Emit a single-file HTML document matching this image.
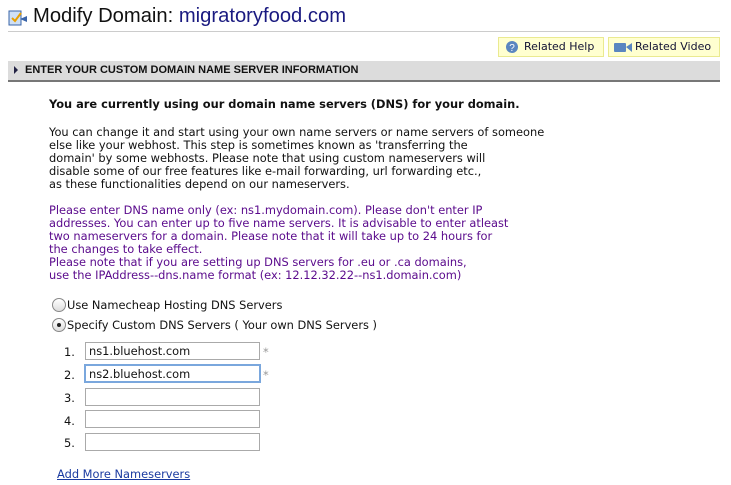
<!DOCTYPE html>
<html><head><style>
body{margin:0;background:#fff;width:731px;height:485px;overflow:hidden;position:relative;font-family:"DejaVu Sans",Verdana,sans-serif;font-size:11.4px;color:#111}
.a{position:absolute;white-space:nowrap}
.title{left:33px;top:5px;font-family:"Liberation Sans",Arial,sans-serif;font-size:20.2px;color:#111}
.title span{color:#1a1a80}
.hr{left:8px;top:31px;width:712px;height:1px;background:#ccc}
.btn{top:37px;height:18px;background:#ffffd0;border:1px solid #eaea90;font-size:11px;line-height:18px;color:#113}
.bar{left:8px;top:61px;width:712px;height:19px;background:#dcdcdc;border-bottom:2px solid #777}
.bar b{position:absolute;left:17px;top:3px;font-family:"Liberation Sans",Arial,sans-serif;font-size:11px;color:#111}
.p{left:49px;line-height:13px}
.pur{color:#5a0a8c}
.rad{width:12px;height:12px;border:1px solid #888;border-radius:50%;background:linear-gradient(#fff,#ddd)}
.in{left:85px;width:170px;height:16px;border:1px solid #aaa;font-size:11.4px;line-height:16px;padding-left:3px}
.n{left:64px}
.st{left:263px;color:#999}
</style></head><body>
<svg class="a" style="left:8px;top:9px" width="20" height="18" viewBox="0 0 20 18"><rect x="1" y="2" width="12" height="14" fill="#cfe0f5" stroke="#3a64a8"/><path d="M4 9l3 3 6-8" stroke="#e8a000" stroke-width="2" fill="none"/><path d="M12 10l7-3v6z" fill="#3a64a8"/></svg>
<div class="a title">Modify Domain: <span>migratoryfood.com</span></div>
<div class="a hr"></div>
<div class="a btn" style="left:498px;width:104px"><svg style="position:absolute;left:6px;top:2px" width="14" height="14"><circle cx="7" cy="7" r="6" fill="#5a86c0"/><text x="7" y="11" font-size="10" fill="#fff" text-anchor="middle" font-family="Liberation Sans">?</text></svg><span style="position:absolute;left:25px">Related Help</span></div>
<div class="a btn" style="left:608px;width:110px"><svg style="position:absolute;left:5px;top:4px" width="18" height="11"><rect x="0" y="1" width="12" height="9" rx="1" fill="#5a86c0"/><path d="M12 5l6-4v9z" fill="#5a86c0"/></svg><span style="position:absolute;left:26px">Related Video</span></div>
<div class="a bar"><span style="position:absolute;left:6px;top:5px;width:0;height:0;border-left:4px solid #224;border-top:4px solid transparent;border-bottom:4px solid transparent"></span><b>ENTER YOUR CUSTOM DOMAIN NAME SERVER INFORMATION</b></div>
<div class="a p" style="top:98px;font-weight:bold">You are currently using our domain name servers (DNS) for your domain.</div>
<div class="a p" style="top:126px">You can change it and start using your own name servers or name servers of someone<br>else like your webhost. This step is sometimes known as 'transferring the<br>domain' by some webhosts. Please note that using custom nameservers will<br>disable some of our free features like e-mail forwarding, url forwarding etc.,<br>as these functionalities depend on our nameservers.</div>
<div class="a p pur" style="top:204px">Please enter DNS name only (ex: ns1.mydomain.com). Please don't enter IP<br>addresses. You can enter up to five name servers. It is advisable to enter atleast<br>two nameservers for a domain. Please note that it will take up to 24 hours for<br>the changes to take effect.<br>Please note that if you are setting up DNS servers for .eu or .ca domains,<br>use the IPAddress--dns.name format (ex: 12.12.32.22--ns1.domain.com)</div>
<div class="a rad" style="left:52px;top:298px"></div>
<div class="a" style="left:67px;top:298px">Use Namecheap Hosting DNS Servers</div>
<div class="a rad" style="left:52px;top:318px"><div style="position:absolute;left:4px;top:4px;width:4px;height:4px;border-radius:50%;background:#222"></div></div>
<div class="a" style="left:67px;top:318px">Specify Custom DNS Servers ( Your own DNS Servers )</div>
<div class="a n" style="top:345px">1.</div><div class="a in" style="top:342px">ns1.bluehost.com</div><div class="a st" style="top:345px">*</div>
<div class="a n" style="top:368px">2.</div><div class="a in" style="top:364px;border:2px solid #7aa7dd;left:84px;height:15px">ns2.bluehost.com</div><div class="a st" style="top:368px">*</div>
<div class="a n" style="top:391px">3.</div><div class="a in" style="top:388px"></div>
<div class="a n" style="top:414px">4.</div><div class="a in" style="top:410px"></div>
<div class="a n" style="top:436px">5.</div><div class="a in" style="top:433px"></div>
<div class="a" style="left:57px;top:467px;color:#1a3aa0;text-decoration:underline">Add More Nameservers</div>
</body></html>
